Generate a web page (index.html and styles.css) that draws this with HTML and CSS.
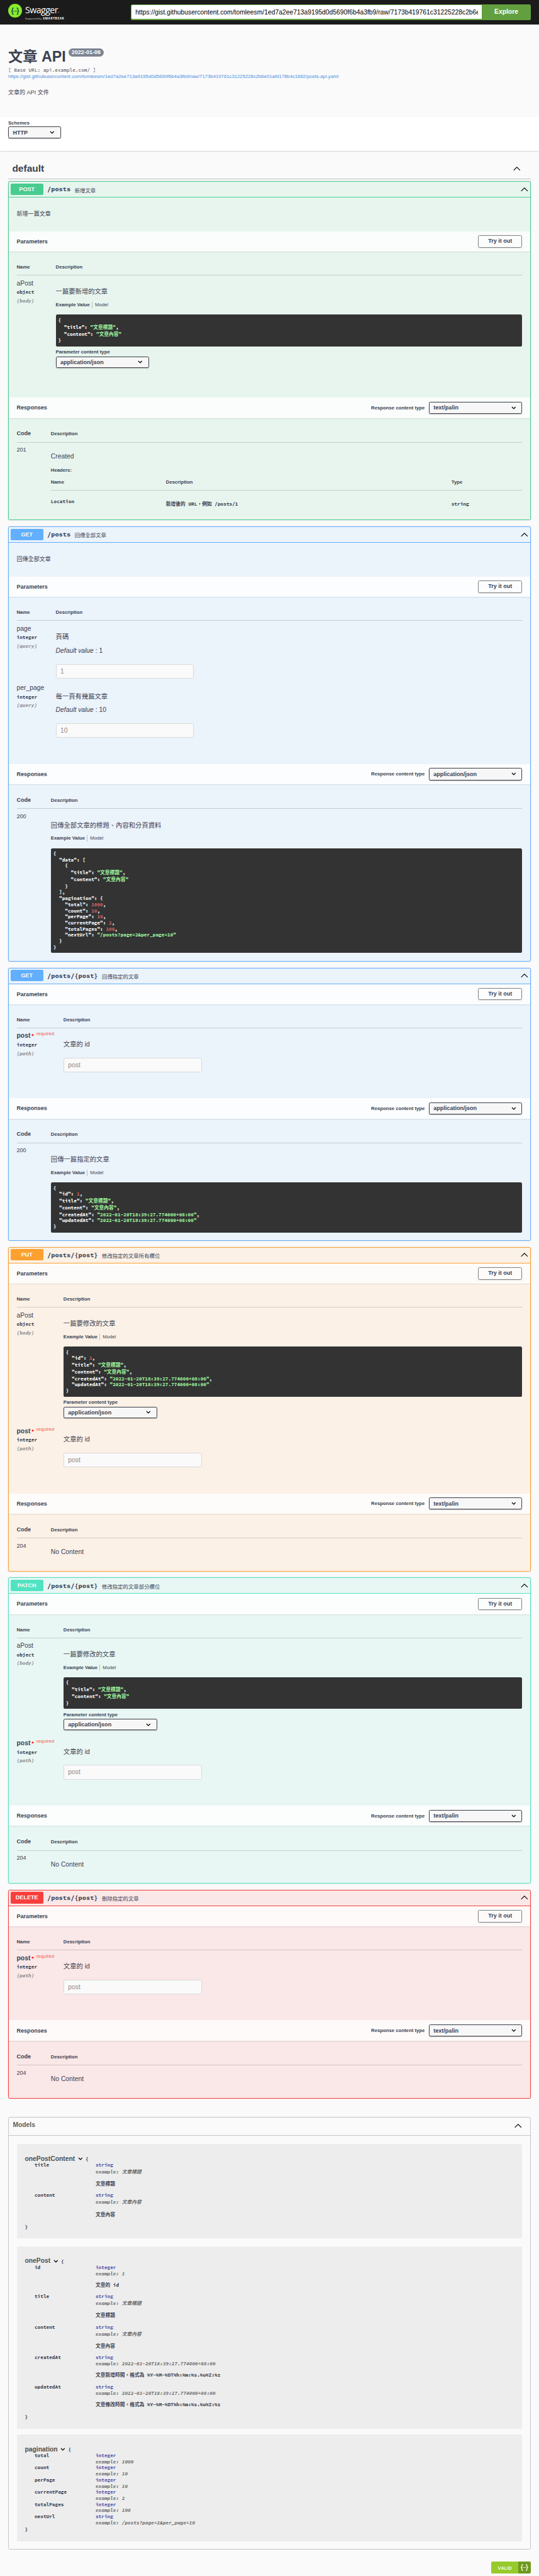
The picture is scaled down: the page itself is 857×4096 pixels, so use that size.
FILE: index.html
```html
<!DOCTYPE html>
<html lang="zh-Hant">
<head>
<meta charset="utf-8">
<title>Swagger UI</title>
<link rel="stylesheet" href="styles.css">
</head>
<body>
<svg width="0" height="0" class="defs">
  <symbol id="up" viewBox="0 0 18 10"><path d="M1 9.2 9 1.2l8 8" fill="none" stroke="#000" stroke-width="1.7"/></symbol>
  <symbol id="down" viewBox="0 0 12 8"><path d="M1.5 1.5 6 6l4.500-4.500" fill="none" stroke="#000" stroke-width="2"/></symbol>
  <symbol id="braces" viewBox="0 0 24 20"><g fill="none" stroke="currentColor" stroke-width="2.300"><path d="M8 1.500H6.800Q4.500 1.500 4.500 4v3q0 2.500-2.800 3 2.800.5 2.800 3v3q0 2.500 2.300 2.500H8"/><path d="M16 1.500h1.200q2.300 0 2.300 2.500v3q0 2.500 2.800 3-2.800.5-2.800 3v3q0 2.500-2.300 2.500H16"/></g><g fill="currentColor"><circle cx="8.300" cy="10" r="1.300"/><circle cx="12" cy="10" r="1.300"/><circle cx="15.700" cy="10" r="1.300"/></g></symbol>
</svg>
<div class="page">
  <header class="topbar">
    <div class="logo">
      <div class="logo-mark"><svg><use href="#braces"/></svg></div>
      <div class="logo-words">
        <div class="logo-name">Swagger<span class="tm">™</span></div>
        <div class="logo-by">Supported by <b>SMARTBEAR</b></div>
      </div>
    </div>
    <div class="search">
      <input class="search-url" type="text" value="https://gist.githubusercontent.com/tomleesm/1ed7a2ee713a9195d0d5690f6b4a3fb9/raw/7173b419761c31225228c2b6e01afd178b4c1682/posts-api.yaml">
      <div class="search-btn">Explore</div>
    </div>
  </header>

  <section class="info">
    <h1>文章 API<span class="version">2022-01-06</span></h1>
    <div class="base mono">[ Base URL: api.example.com/ ]</div>
    <div class="link">https://gist.githubusercontent.com/tomleesm/1ed7a2ee713a9195d0d5690f6b4a3fb9/raw/7173b419761c31225228c2b6e01afd178b4c1682/posts-api.yaml</div>
    <div class="about">文章的 API 文件</div>
  </section>

  <section class="schemes">
    <div class="label">Schemes</div>
    <div class="select select-scheme"><span>HTTP</span><svg><use href="#down"/></svg></div>
  </section>

  <main class="wrap">
    <div class="tag"><span>default</span><svg class="up"><use href="#up"/></svg></div>

    <article class="op post">
      <div class="summary"><span class="method">POST</span><span class="path mono">/posts</span><span class="short">新增文章</span><svg class="up"><use href="#up"/></svg></div>
      <div class="op-desc">新增一篇文章</div>
      <div class="bar"><span>Parameters</span><span class="try">Try it out</span></div>
      <div class="params">
        <div class="head"><span class="c1">Name</span><span>Description</span></div>
        <div class="row row-body">
          <div class="c1"><div class="name">aPost</div><div class="type mono">object</div><div class="in mono">(body)</div></div>
          <div class="c2">
            <div class="text">一篇要新增的文章</div>
            <div class="tabs"><b>Example Value</b><span>Model</span></div>
            <div class="code mono"><div>{</div><div class="cjk">  "title": <i>"文章標題"</i>,</div><div class="cjk">  "content": <i>"文章內容"</i></div><div>}</div></div>
            <div class="pct">Parameter content type</div>
            <div class="select thin"><span>application/json</span><svg><use href="#down"/></svg></div>
          </div>
        </div>
      </div>
      <div class="bar"><span>Responses</span><span class="rct">Response content type</span><div class="select"><span>text/palin</span><svg><use href="#down"/></svg></div></div>
      <div class="responses">
        <div class="head"><span class="c1">Code</span><span>Description</span></div>
        <div class="row">
          <div class="c1 status">201</div>
          <div class="c2">
            <div class="text latin">Created</div>
            <div class="headers">Headers:</div>
            <div class="h-row h-head"><span>Name</span><span>Description</span><span>Type</span></div>
            <div class="h-row h-body mono"><span class="loc">Location</span><span>新增後的 URL，例如 /posts/1</span><span>string</span></div>
          </div>
        </div>
      </div>
    </article>

    <article class="op get">
      <div class="summary"><span class="method">GET</span><span class="path mono">/posts</span><span class="short">回傳全部文章</span><svg class="up"><use href="#up"/></svg></div>
      <div class="op-desc">回傳全部文章</div>
      <div class="bar"><span>Parameters</span><span class="try">Try it out</span></div>
      <div class="params">
        <div class="head"><span class="c1">Name</span><span>Description</span></div>
        <div class="row row-page">
          <div class="c1"><div class="name">page</div><div class="type mono">integer</div><div class="in mono">(query)</div></div>
          <div class="c2"><div class="text">頁碼</div><div class="default"><em>Default value</em> : 1</div><div class="input">1</div></div>
        </div>
        <div class="row row-page">
          <div class="c1"><div class="name">per_page</div><div class="type mono">integer</div><div class="in mono">(query)</div></div>
          <div class="c2"><div class="text">每一頁有幾篇文章</div><div class="default"><em>Default value</em> : 10</div><div class="input">10</div></div>
        </div>
      </div>
      <div class="bar"><span>Responses</span><span class="rct">Response content type</span><div class="select"><span>application/json</span><svg><use href="#down"/></svg></div></div>
      <div class="responses">
        <div class="head"><span class="c1">Code</span><span>Description</span></div>
        <div class="row">
          <div class="c1 status">200</div>
          <div class="c2">
            <div class="text">回傳全部文章的標題、內容和分頁資料</div>
            <div class="tabs"><b>Example Value</b><span>Model</span></div>
            <div class="code mono"><div>{</div><div>  "data": [</div><div>    {</div><div class="cjk">      "title": <i>"文章標題"</i>,</div><div class="cjk">      "content": <i>"文章內容"</i></div><div>    }</div><div>  ],</div><div>  "pagination": {</div><div>    "total": <u>1000</u>,</div><div>    "count": <u>10</u>,</div><div>    "perPage": <u>10</u>,</div><div>    "currentPage": <u>2</u>,</div><div>    "totalPages": <u>100</u>,</div><div>    "nextUrl": <i>"/posts?page=2&amp;per_page=10"</i></div><div>  }</div><div>}</div></div>
          </div>
        </div>
      </div>
    </article>

    <article class="op get wide">
      <div class="summary"><span class="method">GET</span><span class="path mono">/posts/{post}</span><span class="short">回傳指定的文章</span><svg class="up"><use href="#up"/></svg></div>
      <div class="bar"><span>Parameters</span><span class="try">Try it out</span></div>
      <div class="params">
        <div class="head"><span class="c1">Name</span><span>Description</span></div>
        <div class="row row-post">
          <div class="c1"><div class="name req">post<span class="star">*</span><span class="required">required</span></div><div class="type mono">integer</div><div class="in mono">(path)</div></div>
          <div class="c2"><div class="text">文章的 id</div><div class="input">post</div></div>
        </div>
      </div>
      <div class="bar"><span>Responses</span><span class="rct">Response content type</span><div class="select"><span>application/json</span><svg><use href="#down"/></svg></div></div>
      <div class="responses">
        <div class="head"><span class="c1">Code</span><span>Description</span></div>
        <div class="row">
          <div class="c1 status">200</div>
          <div class="c2">
            <div class="text">回傳一篇指定的文章</div>
            <div class="tabs"><b>Example Value</b><span>Model</span></div>
            <div class="code mono"><div>{</div><div>  "id": <u>1</u>,</div><div class="cjk">  "title": <i>"文章標題"</i>,</div><div class="cjk">  "content": <i>"文章內容"</i>,</div><div>  "createdAt": <i>"2022-01-20T18:39:27.774000+08:00"</i>,</div><div>  "updatedAt": <i>"2022-01-20T18:39:27.774000+08:00"</i></div><div>}</div></div>
          </div>
        </div>
      </div>
    </article>

    <article class="op put wide">
      <div class="summary"><span class="method">PUT</span><span class="path mono">/posts/{post}</span><span class="short">修改指定的文章所有欄位</span><svg class="up"><use href="#up"/></svg></div>
      <div class="bar"><span>Parameters</span><span class="try">Try it out</span></div>
      <div class="params">
        <div class="head"><span class="c1">Name</span><span>Description</span></div>
        <div class="row row-body">
          <div class="c1"><div class="name">aPost</div><div class="type mono">object</div><div class="in mono">(body)</div></div>
          <div class="c2">
            <div class="text">一篇要修改的文章</div>
            <div class="tabs"><b>Example Value</b><span>Model</span></div>
            <div class="code mono"><div>{</div><div>  "id": <u>1</u>,</div><div class="cjk">  "title": <i>"文章標題"</i>,</div><div class="cjk">  "content": <i>"文章內容"</i>,</div><div>  "createdAt": <i>"2022-01-20T18:39:27.774000+08:00"</i>,</div><div>  "updatedAt": <i>"2022-01-20T18:39:27.774000+08:00"</i></div><div>}</div></div>
            <div class="pct">Parameter content type</div>
            <div class="select thin"><span>application/json</span><svg><use href="#down"/></svg></div>
          </div>
        </div>
        <div class="row row-post">
          <div class="c1"><div class="name req">post<span class="star">*</span><span class="required">required</span></div><div class="type mono">integer</div><div class="in mono">(path)</div></div>
          <div class="c2"><div class="text">文章的 id</div><div class="input">post</div></div>
        </div>
      </div>
      <div class="bar"><span>Responses</span><span class="rct">Response content type</span><div class="select"><span>text/palin</span><svg><use href="#down"/></svg></div></div>
      <div class="responses">
        <div class="head"><span class="c1">Code</span><span>Description</span></div>
        <div class="row"><div class="c1 status">204</div><div class="c2"><div class="text latin">No Content</div></div></div>
      </div>
    </article>

    <article class="op patch wide">
      <div class="summary"><span class="method">PATCH</span><span class="path mono">/posts/{post}</span><span class="short">修改指定的文章部分欄位</span><svg class="up"><use href="#up"/></svg></div>
      <div class="bar"><span>Parameters</span><span class="try">Try it out</span></div>
      <div class="params">
        <div class="head"><span class="c1">Name</span><span>Description</span></div>
        <div class="row row-body">
          <div class="c1"><div class="name">aPost</div><div class="type mono">object</div><div class="in mono">(body)</div></div>
          <div class="c2">
            <div class="text">一篇要修改的文章</div>
            <div class="tabs"><b>Example Value</b><span>Model</span></div>
            <div class="code mono"><div>{</div><div class="cjk">  "title": <i>"文章標題"</i>,</div><div class="cjk">  "content": <i>"文章內容"</i></div><div>}</div></div>
            <div class="pct">Parameter content type</div>
            <div class="select thin"><span>application/json</span><svg><use href="#down"/></svg></div>
          </div>
        </div>
        <div class="row row-post">
          <div class="c1"><div class="name req">post<span class="star">*</span><span class="required">required</span></div><div class="type mono">integer</div><div class="in mono">(path)</div></div>
          <div class="c2"><div class="text">文章的 id</div><div class="input">post</div></div>
        </div>
      </div>
      <div class="bar"><span>Responses</span><span class="rct">Response content type</span><div class="select"><span>text/palin</span><svg><use href="#down"/></svg></div></div>
      <div class="responses">
        <div class="head"><span class="c1">Code</span><span>Description</span></div>
        <div class="row"><div class="c1 status">204</div><div class="c2"><div class="text latin">No Content</div></div></div>
      </div>
    </article>

    <article class="op delete wide">
      <div class="summary"><span class="method">DELETE</span><span class="path mono">/posts/{post}</span><span class="short">刪除指定的文章</span><svg class="up"><use href="#up"/></svg></div>
      <div class="bar"><span>Parameters</span><span class="try">Try it out</span></div>
      <div class="params">
        <div class="head"><span class="c1">Name</span><span>Description</span></div>
        <div class="row row-post">
          <div class="c1"><div class="name req">post<span class="star">*</span><span class="required">required</span></div><div class="type mono">integer</div><div class="in mono">(path)</div></div>
          <div class="c2"><div class="text">文章的 id</div><div class="input">post</div></div>
        </div>
      </div>
      <div class="bar"><span>Responses</span><span class="rct">Response content type</span><div class="select"><span>text/palin</span><svg><use href="#down"/></svg></div></div>
      <div class="responses">
        <div class="head"><span class="c1">Code</span><span>Description</span></div>
        <div class="row"><div class="c1 status">204</div><div class="c2"><div class="text latin">No Content</div></div></div>
      </div>
    </article>

    <section class="models">
      <div class="models-head"><span>Models</span><svg class="up"><use href="#up"/></svg></div>
      <div class="models-body">
        <div class="model">
          <div class="m-title"><b>onePostContent</b><svg><use href="#down"/></svg><span class="mono">{</span></div>
          <div class="prop mono"><span>title</span><div><div class="t">string</div><div class="ex cjk">example: 文章標題</div><div class="d">文章標題</div></div></div>
          <div class="prop mono"><span>content</span><div><div class="t">string</div><div class="ex cjk">example: 文章內容</div><div class="d">文章內容</div></div></div>
          <div class="end mono">}</div>
        </div>
        <div class="model">
          <div class="m-title"><b>onePost</b><svg><use href="#down"/></svg><span class="mono">{</span></div>
          <div class="prop mono"><span>id</span><div><div class="t">integer</div><div class="ex">example: 1</div><div class="d">文章的 id</div></div></div>
          <div class="prop mono"><span>title</span><div><div class="t">string</div><div class="ex cjk">example: 文章標題</div><div class="d">文章標題</div></div></div>
          <div class="prop mono"><span>content</span><div><div class="t">string</div><div class="ex cjk">example: 文章內容</div><div class="d">文章內容</div></div></div>
          <div class="prop mono"><span>createdAt</span><div><div class="t">string</div><div class="ex">example: 2022-01-20T18:39:27.774000+08:00</div><div class="d">文章新增時間，格式為 %Y-%M-%DT%h:%m:%s.%u%Z:%z</div></div></div>
          <div class="prop mono"><span>updatedAt</span><div><div class="t">string</div><div class="ex">example: 2022-01-20T18:39:27.774000+08:00</div><div class="d">文章修改時間，格式為 %Y-%M-%DT%h:%m:%s.%u%Z:%z</div></div></div>
          <div class="end mono">}</div>
        </div>
        <div class="model last">
          <div class="m-title"><b>pagination</b><svg><use href="#down"/></svg><span class="mono">{</span></div>
          <div class="prop mono"><span>total</span><div><div class="t">integer</div><div class="ex">example: 1000</div></div></div>
          <div class="prop mono"><span>count</span><div><div class="t">integer</div><div class="ex">example: 10</div></div></div>
          <div class="prop mono"><span>perPage</span><div><div class="t">integer</div><div class="ex">example: 10</div></div></div>
          <div class="prop mono"><span>currentPage</span><div><div class="t">integer</div><div class="ex">example: 2</div></div></div>
          <div class="prop mono"><span>totalPages</span><div><div class="t">integer</div><div class="ex">example: 100</div></div></div>
          <div class="prop mono"><span>nextUrl</span><div><div class="t">string</div><div class="ex">example: /posts?page=2&amp;per_page=10</div></div></div>
          <div class="end mono">}</div>
        </div>
      </div>
    </section>

    <div class="badge"><span class="valid">VALID</span><span class="badge-icon"><svg><use href="#braces"/></svg></span></div>
  </main>
</div>
</body>
</html>
```
FILE: styles.css
```css
* { box-sizing: border-box; }
body { margin: 0; background: #fafafa; }
.defs { display: block; }
.page {
  zoom: 0.6466;
  height: 6334px;
  overflow: hidden;
  font-family: "Liberation Sans", "Noto Sans CJK TC", sans-serif;
  color: #3b4151;
  white-space: nowrap;
}
.mono { font-family: "Source Code Pro", "Liberation Mono", "Noto Sans CJK TC", monospace; }
svg { display: block; }
.up { width: 18px; height: 10px; }

/* top bar */
.topbar { height: 60px; background: #1b1b1b; display: flex; align-items: center; padding: 0 20px; }
.logo { width: 301px; height: 60px; display: flex; padding-top: 10px; }
.logo-mark { width: 34px; height: 34px; border-radius: 50%; background: #85ea2d; color: #173647; display: flex; align-items: center; justify-content: center; }
.logo-mark svg { width: 22px; height: 18px; }
.logo-words { padding-left: 8px; color: #fff; font-family: "Open Sans", sans-serif; }
.logo-name { font-size: 22px; line-height: 26px; height: 28px; padding-top: 2px; letter-spacing: -0.9px; }
.tm { font-size: 4px; }
.logo-by { font-size: 6.500px; line-height: 10px; padding-top: 3px; color: #ddd; }
.logo-by b { letter-spacing: 1px; font-size: 7.300px; margin-left: 1px; color: #fff; }
.search { width: 984px; height: 38px; display: flex; background: #62a03f; border-radius: 4px; color: #fff; }
.search-url { width: 862px; height: 34px; margin: 2px 0 2px 2px; border: 0; padding: 0 10px; background: #fff; color: #000; font-family: inherit; font-size: 16px; border-radius: 3px 0 0 3px; }
.search-btn { flex: 1; text-align: center; font-weight: 700; font-size: 16px; line-height: 37px; }

/* info */
.info { height: 227px; padding: 56px 20px 0; }
h1 { margin: 0; font-size: 36px; line-height: 48px; height: 48px; display: flex; }
.version { margin: 3px 0 0 6px; height: 20px; border-radius: 10px; background: #7d8492; color: #fff; font-size: 14px; line-height: 20px; padding: 0 8px; }
.base { font-size: 12px; line-height: 16px; }
.link { font-size: 12px; line-height: 18px; color: #4990e2; }
.about { font-size: 14px; line-height: 20px; margin-top: 20px; }

.schemes { height: 84px; background: #fff; box-shadow: 0 1px 2px rgba(0,0,0,.15); padding: 9px 20px 0; }
.label { font-size: 12px; font-weight: 700; line-height: 15px; }
.select { width: 230px; height: 30px; border: 2px solid #41444e; border-radius: 4px; background: #f7f7f7; box-shadow: 0 1px 2px rgba(0,0,0,.25); display: flex; align-items: center; justify-content: space-between; padding: 0 14px 0 10px; font-size: 14px; font-weight: 700; }
.select svg { width: 12px; height: 8px; }
.select-scheme { width: 130px; }
.thin { border-width: 1px; height: 28px; }

.wrap { padding: 0 20px; }
.tag { height: 70px; border-bottom: 1px solid #c0c2c9; display: flex; justify-content: space-between; align-items: center; padding: 19px 26px 0 10px; margin-bottom: 5px; font-size: 24px; font-weight: 700; }

/* operations */
.op { --c: #49cc90; border: 1px solid var(--c); border-radius: 4px; margin-bottom: 15px; box-shadow: 0 0 3px rgba(0,0,0,.19); }
.post { background: #e7f5ee; }
.get { --c: #61affe; background: #ebf3fb; }
.put { --c: #fca130; background: #fbf1e6; }
.patch { --c: #50e3c2; background: #e9f7f4; }
.delete { --c: #f93e3e; background: #fae7e7; }
.summary { height: 38.5px; border-bottom: 1px solid var(--c); display: flex; align-items: center; padding: 0 5.5px 1px 4.5px; }
.method { width: 80px; height: 28px; border-radius: 3px; background: var(--c); color: #fff; font-size: 14px; font-weight: 700; line-height: 28px; text-align: center; text-shadow: 0 1px 0 rgba(0,0,0,.1); }
.path { font-size: 16px; font-weight: 700; margin-left: 10px; }
.short { font-size: 13px; margin-left: 10px; padding-top: 2px; }
.summary .up { margin-left: auto; }
.op-desc { height: 83px; padding-left: 19.5px; font-size: 14px; line-height: 81px; }
.bar { height: 50px; background: rgba(255,255,255,.8); box-shadow: 0 1px 2px rgba(0,0,0,.1); display: flex; align-items: center; padding: 0 19.5px; font-size: 14px; font-weight: 700; }
.try { margin-left: auto; width: 109px; height: 30px; border: 2px solid #808080; border-radius: 4px; box-shadow: 0 1px 2px rgba(0,0,0,.1); line-height: 26px; text-align: center; }
.rct { margin-left: auto; margin-right: 10px; font-size: 12px; }
.params { padding: 20px 19.5px 60px; }
.responses { padding: 20px 19.5px 0; }
.head { height: 39px; border-bottom: 1px solid rgba(59,65,81,.22); font-size: 12px; font-weight: 700; line-height: 38px; display: flex; }
.responses .head { height: 41px; line-height: 40px; }
.responses .head .c1 { font-size: 14px; }
.row { display: flex; }
.c1 { width: 96px; flex: none; }
.wide .c1 { width: 115px; }
.responses .c1, .wide .responses .c1 { width: 84px; }
.c2 { flex: 1; }
.row-page { height: 146px; }
.row-post { height: 112px; }
.row-body { padding-bottom: 13px; }
.name { margin-top: 10px; height: 18px; font-size: 16px; line-height: 18px; }
.req { font-weight: 700; display: flex; }
.star { color: #f00; font-size: 14px; margin-left: 3px; line-height: 21px; }
.required { color: #f93e3e; opacity: .85; font-size: 12px; font-weight: 400; line-height: 10px; margin-left: 6px; }
.type { font-size: 12px; font-weight: 700; line-height: 27px; }
.in { font-size: 12px; font-weight: 700; font-style: italic; line-height: 13px; color: #888; }
.text { padding-top: 28px; font-size: 16px; line-height: 24px; height: 64px; }
.default { height: 34px; font-size: 16px; line-height: 20px; }
.input { width: 340px; height: 36px; margin-top: 8px; border: 1px solid #d9d9d9; border-radius: 4px; background: #fafafa; color: #8a8a8a; font-size: 16px; line-height: 34px; padding-left: 10px; }
.tabs { height: 32px; display: flex; font-size: 12px; padding-top: 1px; }
.tabs b, .tabs span { line-height: 15px; height: 15px; }
.tabs b { padding-right: 5px; }
.tabs span { border-left: 1px solid rgba(59,65,81,.3); padding-left: 6px; }
.code { background: #333; border-radius: 4px; padding: 7px 6px 6px; color: #fff; font-size: 12px; font-weight: 700; line-height: 15px; white-space: pre; }
.code .cjk { line-height: 17.5px; height: 17.5px; }
.code i { color: #a2fca2; font-style: normal; }
.code u { color: #d36363; text-decoration: none; }
.pct { font-size: 12px; font-weight: 700; line-height: 15px; padding-top: 7px; height: 25px; }
.status { font-size: 14px; line-height: 18px; padding-top: 10px; }
.responses .row { padding-bottom: 19.5px; }
.responses .text.latin { padding-top: 25px; height: 60px; line-height: 20px; }
.headers { font-size: 12px; font-weight: 700; line-height: 15px; height: 18px; }
.h-row { display: grid; grid-template-columns: 283px 702px 1fr; font-size: 12px; font-weight: 700; }
.h-head { height: 40px; line-height: 41px; border-bottom: 1px solid rgba(59,65,81,.22); }
.h-body { height: 52px; line-height: 66px; }
.loc { line-height: 54px; }

/* models */
.models { margin-top: 46px; border: 1px solid #c4c6cc; border-radius: 4px; color: #505050; }
.models-head { height: 45px; border-bottom: 1px solid #c4c6cc; display: flex; justify-content: space-between; padding: 9.5px 21px 0 10px; font-size: 16px; font-weight: 700; line-height: 18px; color: #606060; }
.models-head .up { margin-top: 5px; }
.models-body { padding: 20px 19.5px 19.5px; }
.model { background: #ededed; border-radius: 4px; padding: 26px 20px 16.5px; margin-bottom: 20px; color: #3b4151; }
.model:nth-child(2) { margin-bottom: 15px; }
.model.last { margin-bottom: 0; }
.m-title { height: 18.5px; display: flex; align-items: center; font-size: 16px; color: #505050; }
.m-title svg { width: 12px; height: 8px; margin: 3px 7px 0; }
.m-title .mono { font-size: 12px; font-weight: 700; padding-top: 4px; color: #3b4151; }
.prop { display: grid; grid-template-columns: 150px 1fr; padding-left: 24px; font-size: 12px; font-weight: 700; line-height: 15px; }
.t { color: #55a; }
.ex { color: #6b6b6b; font-style: italic; }
.ex.cjk { line-height: 18px; height: 18px; }
.d { line-height: 18px; height: 18px; margin: 12px 0; }
.end { height: 21px; font-size: 12px; font-weight: 700; line-height: 21px; }

.badge { width: 97px; height: 30px; margin: 29px 0 0 auto; border-radius: 3px; overflow: hidden; display: flex; color: #fff; font-size: 12px; font-family: "Open Sans", sans-serif; font-weight: 600; }
.valid { width: 66px; background: #97ca2b; line-height: 31px; text-align: center; }
.badge-icon { flex: 1; background: #6f991f; display: flex; align-items: center; justify-content: center; }
.badge-icon svg { width: 21px; height: 17px; }
```
